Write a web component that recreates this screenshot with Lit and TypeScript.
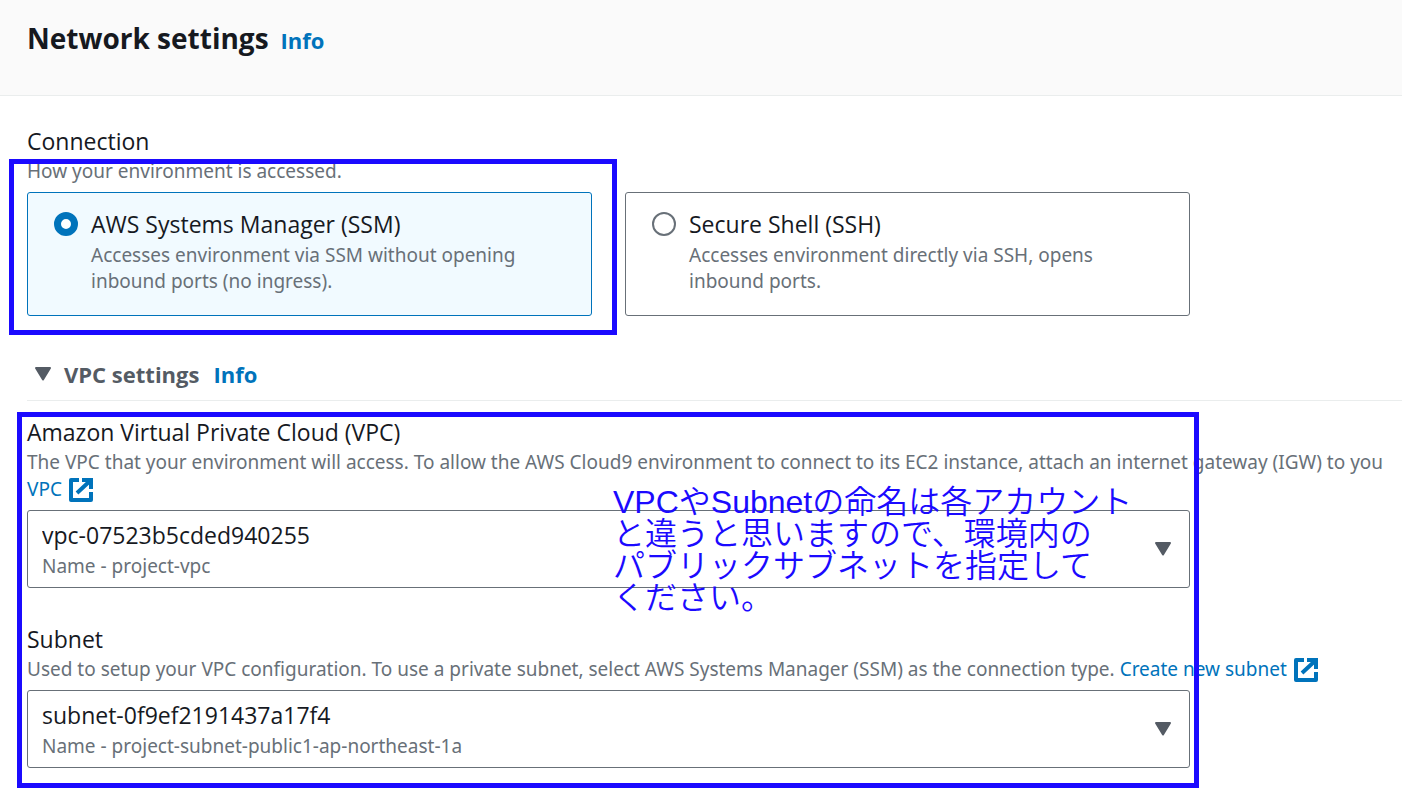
import { LitElement, html, css } from "lit";
import { customElement, property, state } from "lit/decorators.js";

const externalIcon = html`<svg class="external" viewBox="0 0 24 24" aria-hidden="true">
  <path d="M10 2H2v20h20v-8" fill="none" stroke="currentColor" stroke-width="4" stroke-linejoin="round"></path>
  <path d="M13 2h9v9M22 2L8 15" fill="none" stroke="currentColor" stroke-width="4"></path>
</svg>`;

const caretIcon = html`<svg class="caret" viewBox="0 0 18 14" aria-hidden="true">
  <path d="M2 1h14L9 12.500z" fill="currentColor" stroke="currentColor" stroke-width="2" stroke-linejoin="round"></path>
</svg>`;

@customElement("resource-select")
export class ResourceSelect extends LitElement {
  @property() label = "";
  @property() value = "";
  @property() detail = "";

  static styles = css`
    :host {
      display: block;
      min-width: 0;
    }
    .label {
      display: block;
      font-size: 23px;
      line-height: 30px;
      color: #16191f;
    }
    .hint {
      display: block;
      font-family: "Noto Sans", sans-serif;
      font-size: 19px;
      line-height: 27px;
      color: #687078;
      white-space: nowrap;
      margin: 2px 0 7px;
    }
    .box {
      display: grid;
      grid-template-columns: 1fr auto;
      align-items: center;
    }
    .control {
      grid-area: 1 / 1 / 2 / 3;
      appearance: none;
      width: 100%;
      height: 78px;
      box-sizing: border-box;
      margin: 0;
      padding: 8px 48px 36px 14px;
      border: 1px solid #687078;
      border-radius: 3px;
      background: #fff;
      color: #16191f;
      font-family: inherit;
      font-size: 23px;
      line-height: 32px;
    }
    .detail {
      grid-area: 1 / 1 / 2 / 2;
      align-self: end;
      padding: 0 14px 8px 15px;
      font-family: "Noto Sans", sans-serif;
      font-size: 19px;
      line-height: 27px;
      color: #687078;
      pointer-events: none;
    }
    .caret {
      grid-area: 1 / 2 / 2 / 3;
      width: 18px;
      height: 14px;
      margin-right: 18px;
      color: #545b64;
      pointer-events: none;
    }
  `;

  render() {
    return html`
      <label class="label" for="control">${this.label}</label>
      <span class="hint"><slot></slot></span>
      <div class="box">
        <select class="control" id="control" aria-describedby="detail">
          <option>${this.value}</option>
        </select>
        <span class="detail" id="detail">${this.detail}</span>
        ${caretIcon}
      </div>
    `;
  }
}

@customElement("app-root")
export class AppRoot extends LitElement {
  @state() connection = "ssm";

  static styles = css`
    :host {
      display: block;
      overflow: hidden;
      background: #fff;
      color: #16191f;
      font-family: "Open Sans", "Noto Sans", sans-serif;
    }
    .header {
      display: flex;
      align-items: baseline;
      gap: 12px;
      padding: 18px 27px 37px;
      background: #fafafa;
      border-bottom: 1px solid #eaeded;
    }
    .title {
      margin: 0;
      font-size: 28px;
      line-height: 40px;
      font-weight: 700;
    }
    a {
      color: #0073bb;
      text-decoration: none;
    }
    .info {
      font-size: 22px;
      line-height: 30px;
      font-weight: 700;
    }
    .body {
      padding: 30px 0 31px 27px;
    }
    .group {
      max-width: 1163px;
    }
    .legend {
      display: block;
      font-size: 23px;
      line-height: 30px;
    }
    .hint {
      margin: 2px 0 7px;
      font-family: "Noto Sans", sans-serif;
      font-size: 19px;
      line-height: 27px;
      color: #687078;
    }
    .tiles {
      display: grid;
      grid-template-columns: 1fr 1fr;
      gap: 33px;
    }
    .cell {
      position: relative;
      display: grid;
    }
    .tile {
      display: grid;
      grid-template-columns: 24px 1fr;
      column-gap: 13px;
      align-content: start;
      padding: 16px 26px 21px;
      border: 1px solid #687078;
      border-radius: 3px;
    }
    .tile:has(.radio:checked) {
      border-color: #0073bb;
      background: #f1faff;
    }
    .radio {
      appearance: none;
      box-sizing: border-box;
      width: 24px;
      height: 24px;
      margin: 3px 0;
      border: 2px solid #687078;
      border-radius: 50%;
      background: #fff;
    }
    .radio:checked {
      border: 7px solid #0073bb;
    }
    .tile-title {
      font-size: 23px;
      line-height: 30px;
    }
    .tile-text {
      grid-column: 2;
      max-width: 440px;
      margin-top: 3px;
      font-family: "Noto Sans", sans-serif;
      font-size: 19px;
      line-height: 26px;
      color: #687078;
    }
    .marker {
      position: absolute;
      border: 5px solid #1b0aff;
      pointer-events: none;
    }
    .marker-tile {
      inset: -33px -25px -19px -18px;
    }
    .marker-fields {
      inset: -5px -9px -20px -10px;
    }
    .section-head {
      display: flex;
      align-items: center;
      gap: 14px;
      margin-top: 43px;
      padding-bottom: 11px;
      border-bottom: 1px solid #eaeded;
    }
    .toggle {
      display: flex;
      align-items: center;
      gap: 12px;
      margin: 0;
      padding: 0 0 0 7px;
      border: 0;
      background: none;
      color: #545b64;
      font-family: inherit;
      font-size: 22px;
      line-height: 30px;
      font-weight: 700;
    }
    .caret {
      width: 18px;
      height: 14px;
    }
    .fields {
      position: relative;
      display: grid;
      grid-template-columns: minmax(0, 1fr);
      gap: 36px;
      max-width: 1163px;
      margin-top: 16px;
    }
    .external {
      width: 24px;
      height: 24px;
      vertical-align: -6px;
      margin-left: 2px;
    }
    .note {
      position: absolute;
      top: 66px;
      left: 586px;
      margin: 0;
      color: #1b0aff;
      font-family: "Noto Sans CJK JP", sans-serif;
      font-weight: 350;
      font-size: 32px;
      line-height: 32px;
      white-space: nowrap;
      pointer-events: none;
    }
    .latin {
      font-family: "Liberation Sans", sans-serif;
      font-weight: 400;
      line-height: 0;
    }
  `;

  private tile(id: string, title: string, text: string) {
    return html`<label class="tile">
      <input
        class="radio"
        type="radio"
        name="connection"
        .checked=${this.connection === id}
        @change=${() => (this.connection = id)}
      />
      <span class="tile-title">${title}</span>
      <span class="tile-text">${text}</span>
    </label>`;
  }

  render() {
    return html`
      <header class="header">
        <h2 class="title">Network settings</h2>
        <a class="info" href="#">Info</a>
      </header>
      <main class="body">
        <div class="group" role="radiogroup" aria-labelledby="connection">
          <span class="legend" id="connection">Connection</span>
          <p class="hint">How your environment is accessed.</p>
          <div class="tiles">
            <div class="cell">
              ${this.tile("ssm", "AWS Systems Manager (SSM)", "Accesses environment via SSM without opening inbound ports (no ingress).")}
              <div class="marker marker-tile"></div>
            </div>
            <div class="cell">
              ${this.tile("ssh", "Secure Shell (SSH)", "Accesses environment directly via SSH, opens inbound ports.")}
            </div>
          </div>
        </div>

        <div class="section-head">
          <button class="toggle" type="button" aria-expanded="true">${caretIcon}VPC settings</button>
          <a class="info" href="#">Info</a>
        </div>

        <div class="fields">
          <resource-select label="Amazon Virtual Private Cloud (VPC)" value="vpc-07523b5cded940255" detail="Name - project-vpc">
            The VPC that your environment will access. To allow the AWS Cloud9 environment to connect to its EC2 instance, attach an internet gateway (IGW) to you<br />
            <a href="#">VPC ${externalIcon}</a>
          </resource-select>
          <resource-select label="Subnet" value="subnet-0f9ef2191437a17f4" detail="Name - project-subnet-public1-ap-northeast-1a">
            Used to setup your VPC configuration. To use a private subnet, select AWS Systems Manager (SSM) as the connection type.
            <a href="#">Create new subnet ${externalIcon}</a>
          </resource-select>
          <div class="marker marker-fields"></div>
          <p class="note"><span class="latin">VPC</span>や<span class="latin">Subnet</span>の命名は各アカウント<br />と違うと思いますので、環境内の<br />パブリックサブネットを指定して<br />ください。</p>
        </div>
      </main>
    `;
  }
}
